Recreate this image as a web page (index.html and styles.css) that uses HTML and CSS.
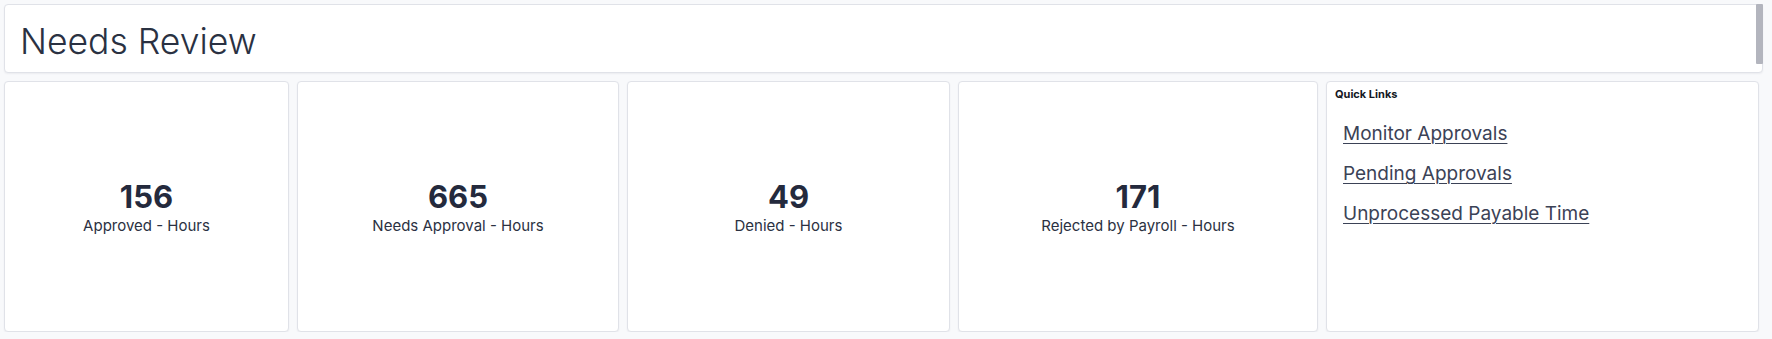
FILE: index.html
```html
<!DOCTYPE html>
<html lang="en">
<head>
<meta charset="utf-8">
<title>Needs Review</title>
<link rel="stylesheet" href="styles.css">
</head>
<body>
<div class="page">
  <header class="title-card">
    <h1 class="title">Needs Review</h1>
    <div class="scroll-thumb"></div>
  </header>
  <section class="tiles">
    <div class="card metric">
      <div class="metric-value">156</div>
      <div class="metric-label">Approved - Hours</div>
    </div>
    <div class="card metric">
      <div class="metric-value">665</div>
      <div class="metric-label">Needs Approval - Hours</div>
    </div>
    <div class="card metric">
      <div class="metric-value">49</div>
      <div class="metric-label">Denied - Hours</div>
    </div>
    <div class="card metric">
      <div class="metric-value">171</div>
      <div class="metric-label">Rejected by Payroll - Hours</div>
    </div>
    <div class="card links">
      <div class="links-title">Quick Links</div>
      <ul class="link-list">
        <li><a href="#">Monitor Approvals</a></li>
        <li><a href="#">Pending Approvals</a></li>
        <li><a href="#">Unprocessed Payable Time</a></li>
      </ul>
    </div>
  </section>
</div>
</body>
</html>
```

FILE: styles.css
```css
* { box-sizing: border-box; }

html, body {
  margin: 0;
  padding: 0;
  background: #f8f9fb;
  font-family: Inter, "Noto Sans", "Liberation Sans", sans-serif;
  color: #242a3d;
}

.page {
  width: 1763px;
  padding: 4px 0 0 4px;
  display: flex;
  flex-direction: column;
  gap: 8px;
}

.title-card {
  position: relative;
  height: 69px;
  background: #ffffff;
  border: 1px solid #e0e2e8;
  border-radius: 4px;
  box-shadow: 0 1px 2px rgba(30, 40, 70, 0.06);
  padding: 15px 15px 0;
}

.title {
  margin: 0;
  font-size: 35.5px;
  line-height: 44px;
  font-weight: 300;
  color: #2a3142;
  letter-spacing: 0;
}

.scroll-thumb {
  position: absolute;
  top: -1px;
  right: -1px;
  width: 7px;
  height: 60px;
  background: #b3b5be;
  border-radius: 1px;
}

.tiles {
  display: grid;
  grid-template-columns: 285px 322px 323px 360px 433px;
  column-gap: 8px;
  height: 251px;
}

.card {
  background: #ffffff;
  border: 1px solid #e0e2e8;
  border-radius: 4px;
  box-shadow: 0 1px 2px rgba(30, 40, 70, 0.06);
}

.metric {
  display: flex;
  flex-direction: column;
  align-items: center;
  justify-content: center;
}

.metric-value {
  font-size: 31px;
  line-height: 38px;
  font-weight: 700;
  color: #242a3d;
}

.metric-label {
  font-size: 15px;
  line-height: 19px;
  color: #2b3142;
}

.links {
  padding: 5px 8px 8px;
}

.links-title {
  font-size: 11px;
  line-height: 14px;
  font-weight: 700;
  color: #141824;
}

.link-list {
  list-style: none;
  margin: 13px 0 0;
  padding: 0 0 0 8px;
}

.link-list li {
  font-size: 19px;
  line-height: 40px;
}

.link-list a {
  color: #3b4256;
  text-decoration: underline;
  text-decoration-thickness: 1px;
  text-underline-offset: 3px;
}
```
